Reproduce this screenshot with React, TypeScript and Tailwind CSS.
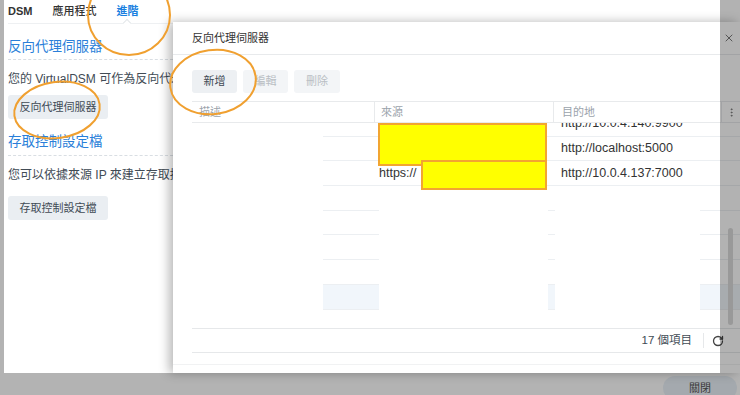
import React from "react"
import { X, RotateCw, EllipsisVertical } from "lucide-react"

type Row = {
    src: string
    dst: string
}

const rows: Row[] = [
    { src: "", dst: "http://10.0.4.140:9900" },
    { src: "", dst: "http://localhost:5000" },
    { src: "https://", dst: "http://10.0.4.137:7000" },
    { src: "", dst: "" },
    { src: "", dst: "" },
    { src: "", dst: "" },
    { src: "", dst: "" },
    { src: "", dst: "" },
    { src: "", dst: "" },
]

const LeftPanel = () => {
    return (
        <div className="w-[169px] h-full bg-white pl-[4px] text-[#414b55]">
            <div className="relative flex h-[24px] items-center gap-[20px] border-b border-[#eef0f2] text-[11px]">
                <span className="font-bold text-[#333]">DSM</span>
                <span className="font-medium text-[#333]">應用程式</span>
                <span className="relative font-semibold text-[#1a7fe0]">
                    進階
                    <span className="absolute left-[8px] top-[17px] h-[6px] w-[6px] rotate-45 border-l border-t border-[#e3e6e9] bg-white" />
                </span>
            </div>

            <div className="mt-[13px] h-[23px] border-b border-dashed border-[#d9dee3] text-[13.5px] leading-[20px] text-[#2a7fd9] whitespace-nowrap">
                反向代理伺服器
            </div>
            <div className="mt-[11px] h-[16px] whitespace-nowrap text-[12px] leading-[16px]">
                您的 VirtualDSM 可作為反向代理伺服器
            </div>
            <button className="mt-[8px] h-[24px] w-[100px] rounded-[3px] bg-[#eaeef2] text-[11px] text-[#414b55]">
                反向代理伺服器
            </button>

            <div className="mt-[13px] h-[24px] border-b border-dashed border-[#d9dee3] text-[13.5px] leading-[20px] text-[#2a7fd9] whitespace-nowrap">
                存取控制設定檔
            </div>
            <div className="mt-[11px] h-[16px] whitespace-nowrap text-[12px] leading-[16px]">
                您可以依據來源 IP 來建立存取控制設定檔
            </div>
            <button className="mt-[13px] h-[24px] w-[100px] rounded-[3px] bg-[#eaeef2] text-[11px] text-[#414b55]">
                存取控制設定檔
            </button>
        </div>
    )
}

const Dialog = () => {
    return (
        <div className="absolute left-[173px] top-[22px] flex h-[351px] w-[567px] flex-col bg-white shadow-[-4px_0_10px_rgba(0,0,0,0.28)]">
            {/* title */}
            <div className="flex h-[33px] shrink-0 items-center border-b border-[#e8eaec] pl-[19px] text-[11px] text-[#333]">
                反向代理伺服器
            </div>

            {/* toolbar */}
            <div className="flex h-[46px] shrink-0 gap-[6px] pl-[19px] pt-[15px]">
                <button className="h-[23px] w-[45px] rounded-[3px] bg-[#edf0f3] text-[11px] text-[#414b55]">新增</button>
                <button className="h-[23px] w-[45px] rounded-[3px] bg-[#f3f5f7] text-[11px] text-[#b9bec3]">編輯</button>
                <button className="h-[23px] w-[46px] rounded-[3px] bg-[#f3f5f7] text-[11px] text-[#b9bec3]">刪除</button>
            </div>

            {/* grid */}
            <div className="ml-[19px] flex flex-col">
                <div className="flex h-[22px] border-y border-[#e8eaec] text-[11px] text-[#9ba3ab]">
                    <div className="w-[182px] pl-[7px] leading-[20px]">描述</div>
                    <div className="w-[179px] border-l border-[#e8eaec] pl-[6px] leading-[20px]">來源</div>
                    <div className="w-[168px] border-l border-[#e8eaec] pl-[8px] leading-[20px]">目的地</div>
                    <div className="flex w-[19px] items-center justify-center border-l border-[#e8eaec] text-[#777]">
                        <EllipsisVertical size={11} strokeWidth={2} />
                    </div>
                </div>

                <div className="relative h-[205px] overflow-hidden">
                    <div className="-mt-[11px]">
                        {rows.map((row, i) => (
                            <div
                                key={i}
                                className={`flex h-[24.7px] items-center border-b border-[#eceff2] text-[12.5px] text-[#333] ${i === 7 ? "bg-[#f1f6fb]" : ""}`}
                            >
                                <div className="w-[182px]" />
                                <div className="w-[179px] pl-[5px]">{row.src}</div>
                                <div className="w-[168px] pl-[8px] whitespace-nowrap">{row.dst}</div>
                                <div className="w-[19px]" />
                            </div>
                        ))}
                    </div>

                    {/* whited out cells */}
                    <div className="absolute left-0 top-0 h-full w-[131px] bg-white" />
                    <div className="absolute left-[187px] top-[65px] h-full w-[169px] bg-white" />
                    <div className="absolute left-[363px] top-[65px] h-full w-[145px] bg-white" />

                    {/* yellow redaction */}
                    <div className="absolute left-[186px] top-0 h-[43px] w-[169px] border-2 border-[#f2a531] bg-[#ffff00]" />
                    <div className="absolute left-[229px] top-[37px] h-[30px] w-[126px] border-2 border-[#f2a531] bg-[#ffff00]" />
                </div>

                <div className="flex h-[25px] items-center justify-end border-y border-[#e6e8ea] pr-[16px] text-[11.5px] text-[#414b55]">
                    <span>17 個項目</span>
                    <span className="ml-[11px] mr-[8px] h-[15px] w-px bg-[#e6e8ea]" />
                    <RotateCw size={12} strokeWidth={2.6} className="text-[#444]" />
                </div>
            </div>
            <div className="mt-[11px] border-t border-[#f1f2f3]" />

            {/* scrollbar */}
            <div className="absolute left-[555px] top-[206px] h-[97px] w-[5px] rounded-full bg-[#dcdcdc]" />
        </div>
    )
}

const App = () => {
    return (
        <div className="relative h-[395px] w-[740px] overflow-hidden bg-[#b3b3b3] font-['Liberation_Sans','Noto_Sans_CJK_TC',sans-serif]">
            <div className="flex h-[373px] pl-[4px]">
                <LeftPanel />
                <div className="flex-1 bg-white" />
            </div>
            <div className="flex h-[22px] justify-end pr-[3px] pt-[3px]">
                <button className="h-[24px] w-[74px] rounded-full bg-[#a4a9ae] text-[11px] text-[#3a3a3a]">關閉</button>
            </div>

            <Dialog />

            {/* dim strip on the right */}
            <div className="absolute right-0 top-0 h-[373px] w-[20px] bg-black/30">
                <X size={12} strokeWidth={2} className="ml-[3px] mt-[32px] text-[#555]" />
            </div>

            {/* annotations */}
            <svg className="pointer-events-none absolute left-0 top-0" width="740" height="395" viewBox="0 0 740 395">
                <g fill="none" stroke="#f0a030" strokeWidth="2">
                    <ellipse cx="129" cy="15" rx="41" ry="40" />
                    <ellipse cx="57" cy="110" rx="43" ry="28" transform="rotate(-8 57 110)" />
                    <ellipse cx="213" cy="82" rx="43" ry="32" transform="rotate(-8 213 82)" />
                </g>
            </svg>
        </div>
    )
}

export default App
